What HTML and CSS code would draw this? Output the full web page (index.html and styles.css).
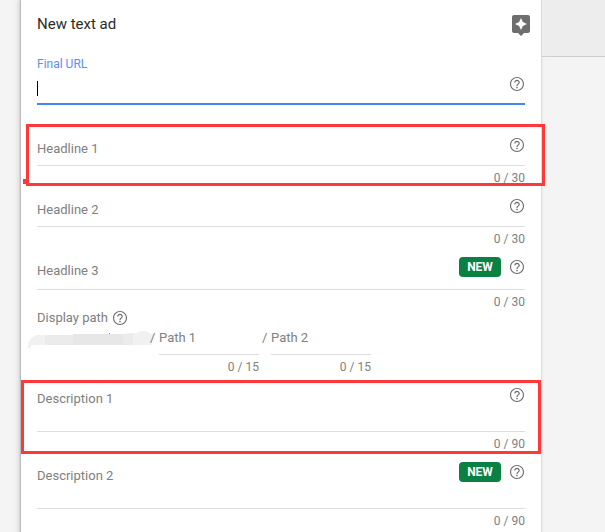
FILE: index.html
```html
<!DOCTYPE html>
<html lang="en">
<head>
  <meta charset="UTF-8" />
  <meta name="viewport" content="width=device-width, initial-scale=1.0"/>
  <title>New text ad</title>
  <link rel="stylesheet" href="styles.css">
</head>
<body>
  <svg width="0" height="0" class="sprite" aria-hidden="true">
    <symbol id="help" viewBox="2 2 20 20">
      <path d="M11 18h2v-2h-2v2zm1-16C6.48 2 2 6.48 2 12s4.48 10 10 10 10-4.48 10-10S17.52 2 12 2zm0 18.400c-4.63 0-8.4-3.77-8.4-8.4S7.37 3.600 12 3.600s8.4 3.77 8.4 8.4-3.77 8.4-8.4 8.4zM12 6c-2.21 0-4 1.79-4 4h1.700c0-1.25 1.05-2.3 2.3-2.3s2.3 1.05 2.3 2.3c0 2-3.15 1.8-3.15 5h1.700c0-2.25 3.15-2.5 3.15-5 0-2.21-1.79-4-4-4z"/>
    </symbol>
  </svg>

  <main class="panel">
    <header>
      <h1>New text ad</h1>
      <button type="button" class="preview" aria-label="Ad ideas">
        <svg width="18" height="21" viewBox="3 2 18 21"><path d="M19 2H5c-1.1 0-2 .9-2 2v14c0 1.1.9 2 2 2h4l3 3 3-3h4c1.1 0 2-.9 2-2V4c0-1.1-.9-2-2-2zm-5.12 10.88L12 17l-1.88-4.12L6 11l4.12-1.88L12 5l1.88 4.12L18 11l-4.12 1.88z"/></svg>
      </button>
    </header>

    <form>
      <div class="field active">
        <label for="url">Final URL</label>
        <div class="row">
          <span class="caret"></span>
          <input type="text" id="url">
          <button type="button" class="help" aria-label="Help"><svg><use href="#help"/></svg></button>
        </div>
      </div>

      <div class="field marked">
        <div class="row">
          <label for="headline1">Headline 1</label>
          <input type="text" id="headline1" maxlength="30">
          <button type="button" class="help" aria-label="Help"><svg><use href="#help"/></svg></button>
        </div>
        <p class="count">0 / 30</p>
      </div>

      <div class="field">
        <div class="row">
          <label for="headline2">Headline 2</label>
          <input type="text" id="headline2" maxlength="30">
          <button type="button" class="help" aria-label="Help"><svg><use href="#help"/></svg></button>
        </div>
        <p class="count">0 / 30</p>
      </div>

      <div class="field last-headline">
        <div class="row">
          <label for="headline3">Headline 3</label>
          <input type="text" id="headline3" maxlength="30">
          <span class="badge">NEW</span>
          <button type="button" class="help" aria-label="Help"><svg><use href="#help"/></svg></button>
        </div>
        <p class="count">0 / 30</p>
      </div>

      <div class="path-title">
        <span>Display path</span>
        <button type="button" class="help" aria-label="Help"><svg><use href="#help"/></svg></button>
      </div>
      <div class="paths">
        <svg class="domain" width="126" height="20" viewBox="0 0 126 20" aria-hidden="true">
          <path fill="#f1f1f1" d="M0 17V12L3 7l5-3h37l28-1h22l13-1 5-2h5l5 3h2v5l-2 6H3v3z"/>
          <path fill="#ebebeb" d="M17 4h28v10H17z"/>
          <path fill="#e6e7e6" d="M45 3h50v11H45z"/>
          <path fill="#ebebeb" d="M95 3l10-1v12H95z"/>
          <path fill="#888" d="M81 2h1v1h-1z"/>
        </svg>
        <span class="slash">/</span>
        <div class="path">
          <div class="row">
            <label for="path1">Path 1</label>
            <input type="text" id="path1" maxlength="15">
          </div>
          <p class="count">0 / 15</p>
        </div>
        <span class="slash">/</span>
        <div class="path">
          <div class="row">
            <label for="path2">Path 2</label>
            <input type="text" id="path2" maxlength="15">
          </div>
          <p class="count">0 / 15</p>
        </div>
      </div>

      <div class="field tall marked-wide">
        <div class="row">
          <label for="description1">Description 1</label>
          <input type="text" id="description1" maxlength="90">
          <button type="button" class="help" aria-label="Help"><svg><use href="#help"/></svg></button>
        </div>
        <p class="count">0 / 90</p>
      </div>

      <div class="field tall">
        <div class="row">
          <label for="description2">Description 2</label>
          <input type="text" id="description2" maxlength="90">
          <span class="badge">NEW</span>
          <button type="button" class="help" aria-label="Help"><svg><use href="#help"/></svg></button>
        </div>
        <p class="count">0 / 90</p>
      </div>
    </form>
  </main>

  <aside>
    <div class="side-top"></div>
  </aside>
</body>
</html>
```

FILE: styles.css
```css
* {
  margin: 0;
  padding: 0;
  box-sizing: border-box;
}
body {
  display: grid;
  grid-template-columns: 1fr 63px;
  min-height: 100vh;
  padding-left: 21px;
  overflow: hidden;
  background: #f4f4f4;
  color: #808080;
  font-family: Roboto, Arial, sans-serif;
  font-size: 13px;
  line-height: 20px;
}
.sprite {
  position: absolute;
}
.panel {
  background: #fff;
  border-right: 1px solid #dcdcdc;
  box-shadow: -1px 0 1px #bbb, -2px 0 5px rgba(0, 0, 0, 0.16);
}
.side-top {
  height: 57px;
  background: #ededed;
  border-bottom: 1px solid #cfcfcf;
}
header {
  display: flex;
  justify-content: space-between;
  align-items: flex-start;
  height: 56px;
  padding: 15px 11px 0 16px;
}
h1 {
  color: #2b2b2b;
  font-size: 15px;
  font-weight: 400;
  line-height: 18px;
}
form {
  padding: 0 16px;
}
button {
  display: block;
  border: 0;
  background: none;
  cursor: pointer;
}
button svg {
  display: block;
  fill: #6e6e6e;
}
.help,
.help svg {
  width: 14px;
  height: 14px;
}
input {
  flex: 1;
  min-width: 0;
  height: 24px;
  border: 0;
  outline: 0;
  background: none;
  font: inherit;
}

/* fields */
.field {
  position: relative;
  margin-bottom: 9px;
}
.row {
  display: flex;
  align-items: flex-start;
  height: 32px;
  border-bottom: 1px solid #dedede;
}
.row label {
  margin-top: 5px;
}
.row .help {
  margin: 4px 1px 0 0;
}
.count {
  padding-top: 4px;
  font-size: 12px;
  line-height: 16px;
  text-align: right;
}
.badge {
  width: 42px;
  height: 20px;
  margin: 1px 9px 0 0;
  border-radius: 4px;
  background: #0b8043;
  color: #fff;
  font-size: 12px;
  font-weight: 700;
  text-align: center;
}
.last-headline {
  margin-bottom: 0;
}
.last-headline .row {
  height: 34px;
}
.tall .row {
  height: 48px;
}

.active {
  margin-bottom: 29px;
}
.active > label {
  display: block;
  color: #5a8ff5;
  font-size: 12px;
  line-height: 16px;
}
.active .row {
  height: 33px;
  border-bottom: 2px solid #4285f4;
}
.active .help {
  margin-top: 5px;
}
.caret {
  width: 1px;
  height: 15px;
  margin-top: 9px;
  background: #000;
}

/* display path */
.path-title {
  display: flex;
  align-items: center;
  gap: 5px;
  line-height: 16px;
}
.paths {
  display: flex;
  align-items: flex-start;
  margin-bottom: 9px;
}
.path {
  width: 100px;
}
.path .row {
  height: 29px;
}
.slash,
.path .row label {
  margin-top: 2px;
}
.slash {
  width: 12px;
  padding-left: 3px;
}
.domain {
  margin: 5px -7px 0 -9px;
}

/* red callouts */
.marked::before,
.marked-wide::before {
  content: "";
  position: absolute;
  inset: -10px -20px 0 -11px;
  border: 3px solid #ff3838;
  pointer-events: none;
}
.marked-wide::before {
  inset: -4px -16px -2px;
}
.marked::after {
  content: "";
  position: absolute;
  left: -14px;
  bottom: 2px;
  width: 5px;
  height: 5px;
  background: #ff3838;
}
```
